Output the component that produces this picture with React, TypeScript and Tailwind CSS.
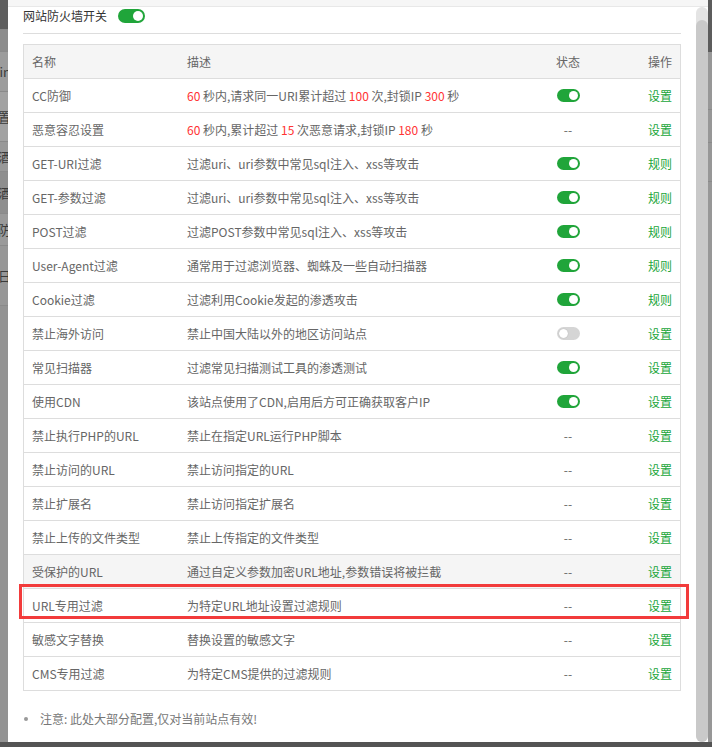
import React from "react";

type Row = {
  name: string;
  desc: React.ReactNode;
  status: "on" | "off" | "none";
  action: string;
  active?: boolean;
  marked?: boolean;
};

const Num = ({ children }: { children: React.ReactNode }) => (
  <span className="text-[#f33]">{children}</span>
);

const rows: Row[] = [
  {
    name: "CC防御",
    desc: (
      <>
        <Num>60</Num> 秒内,请求同一URI累计超过 <Num>100</Num> 次,封锁IP <Num>300</Num> 秒
      </>
    ),
    status: "on",
    action: "设置",
  },
  {
    name: "恶意容忍设置",
    desc: (
      <>
        <Num>60</Num> 秒内,累计超过 <Num>15</Num> 次恶意请求,封锁IP <Num>180</Num> 秒
      </>
    ),
    status: "none",
    action: "设置",
  },
  { name: "GET-URI过滤", desc: "过滤uri、uri参数中常见sql注入、xss等攻击", status: "on", action: "规则" },
  { name: "GET-参数过滤", desc: "过滤uri、uri参数中常见sql注入、xss等攻击", status: "on", action: "规则" },
  { name: "POST过滤", desc: "过滤POST参数中常见sql注入、xss等攻击", status: "on", action: "规则" },
  { name: "User-Agent过滤", desc: "通常用于过滤浏览器、蜘蛛及一些自动扫描器", status: "on", action: "规则" },
  { name: "Cookie过滤", desc: "过滤利用Cookie发起的渗透攻击", status: "on", action: "规则" },
  { name: "禁止海外访问", desc: "禁止中国大陆以外的地区访问站点", status: "off", action: "设置" },
  { name: "常见扫描器", desc: "过滤常见扫描测试工具的渗透测试", status: "on", action: "设置" },
  { name: "使用CDN", desc: "该站点使用了CDN,启用后方可正确获取客户IP", status: "on", action: "设置" },
  { name: "禁止执行PHP的URL", desc: "禁止在指定URL运行PHP脚本", status: "none", action: "设置" },
  { name: "禁止访问的URL", desc: "禁止访问指定的URL", status: "none", action: "设置" },
  { name: "禁止扩展名", desc: "禁止访问指定扩展名", status: "none", action: "设置" },
  { name: "禁止上传的文件类型", desc: "禁止上传指定的文件类型", status: "none", action: "设置" },
  { name: "受保护的URL", desc: "通过自定义参数加密URL地址,参数错误将被拦截", status: "none", action: "设置", active: true },
  { name: "URL专用过滤", desc: "为特定URL地址设置过滤规则", status: "none", action: "设置", marked: true },
  { name: "敏感文字替换", desc: "替换设置的敏感文字", status: "none", action: "设置" },
  { name: "CMS专用过滤", desc: "为特定CMS提供的过滤规则", status: "none", action: "设置" },
];

function Toggle({ on, big }: { on: boolean; big?: boolean }) {
  return (
    <span
      className={`flex items-center rounded-full ${big ? "w-[27px] h-[14px]" : "w-[23px] h-[13px]"} ${
        on ? "bg-[#20a53a] justify-end pr-[2px]" : "bg-[#d5d5d5] justify-start pl-[2px]"
      }`}
    >
      <span
        className={`rounded-full bg-white ${big ? "w-[10px] h-[10px]" : "w-[9px] h-[9px]"} ${
          on ? "" : "shadow-[0_0_1px_rgba(0,0,0,0.3)]"
        }`}
      />
    </span>
  );
}

// page behind the dialog, only a sliver shows on the left
function Backdrop() {
  const strips = [
    { h: "h-[30px]", bg: "bg-[#5e5e5e]", t: "" },
    { h: "h-[22px]", bg: "bg-[#8c8c8c]", t: "" },
    { h: "h-[40px]", bg: "bg-[#9c9c9c]", t: "in" },
    { h: "h-[50px]", bg: "bg-[#a2a2a2]", t: "置" },
    { h: "h-[30px]", bg: "bg-[#999]", t: "酒" },
    { h: "h-[42px]", bg: "bg-[#8e8e8e]", t: "酒" },
    { h: "h-[32px]", bg: "bg-[#9a9a9a]", t: "防" },
    { h: "h-[60px]", bg: "bg-[#979797]", t: "日" },
  ];
  return (
    <div className="w-[8px] h-full flex flex-col overflow-hidden bg-[#939393]">
      {strips.map((s, i) => (
        <div key={i} className={`${s.h} ${s.bg} shrink-0 flex items-center justify-end overflow-hidden border-b border-[#8a8a8a]`}>
          <span className="whitespace-nowrap mr-[-3px] text-[13px] text-[#3a3a3a]">{s.t}</span>
        </div>
      ))}
    </div>
  );
}

export default function App() {
  return (
    <div className="w-[712px] h-[747px] overflow-hidden bg-[#545454] flex flex-col font-[family-name:Noto_Sans_CJK_SC,Noto_Sans,sans-serif]">
      <div className="h-[742px] flex">
        <Backdrop />

        <div className="w-[700px] h-full bg-white flex flex-col">
          <div className="h-[7px] bg-[#f6f6f6] border-b border-[#e8e8e8]" />
          <div className="flex-1 flex min-h-0">
            <div className="flex-1 pl-[15px] pr-[15px] pt-[2px]">
              <div className="h-[14px] flex items-center gap-[11px]">
                <span className="text-[12px] text-[#333]">网站防火墙开关</span>
                <Toggle on big />
              </div>
              <div className="mt-[10px] h-px bg-[#ddd]" />

              <div className="mt-[10px] border-x border-t border-[#ddd] text-[12px] text-[#666]">
                <div className="grid grid-cols-[156px_1fr_80px_72px] h-[34px] items-center bg-[#f5f5f5] border-b border-[#ddd]">
                  <span className="pl-[8px]">名称</span>
                  <span className="pl-[7px]">描述</span>
                  <span className="text-center">状态</span>
                  <span className="text-right pr-[8px]">操作</span>
                </div>
                {rows.map((r) => (
                  <div
                    key={r.name}
                    className={`relative grid grid-cols-[156px_1fr_80px_72px] h-[34px] items-center border-b border-[#ddd] ${
                      r.active ? "bg-[#f5f5f5]" : "bg-white"
                    }`}
                  >
                    <span className="pl-[8px] whitespace-nowrap">{r.name}</span>
                    <span className="pl-[7px] whitespace-nowrap">{r.desc}</span>
                    <span className="flex justify-center">
                      {r.status === "none" ? "--" : <Toggle on={r.status === "on"} />}
                    </span>
                    <span className="text-right pr-[8px] text-[#20a53a]">{r.action}</span>
                    {r.marked && (
                      <div className="absolute left-[-5px] top-[-5px] w-[670px] h-[35px] border-[3px] border-[#f23b3b] pointer-events-none" />
                    )}
                  </div>
                ))}
              </div>

              <div className="mt-[20px] flex items-center text-[12px] text-[#777] leading-[16px]">
                <span className="ml-[1px] mr-[12px] w-[4px] h-[4px] rounded-full bg-[#999]" />
                <span>注意: 此处大部分配置,仅对当前站点有效!</span>
              </div>
            </div>

            <div className="w-[12px] h-full flex flex-col rounded-full bg-[#e4e4e4] pt-[13px]">
              <div className="flex-1 rounded-full bg-[#c9c9c9]" />
            </div>
          </div>
        </div>

        <div className="w-[4px] h-full flex flex-col bg-[#979797]">
          <div className="h-[52px] bg-[#5c5c5c]" />
          <div className="h-[58px] border-b border-[#8a8a8a]" />
          <div className="h-[33px] border-b border-[#8a8a8a]" />
          <div className="h-[39px] border-b border-[#8a8a8a]" />
        </div>
      </div>
    </div>
  );
}
